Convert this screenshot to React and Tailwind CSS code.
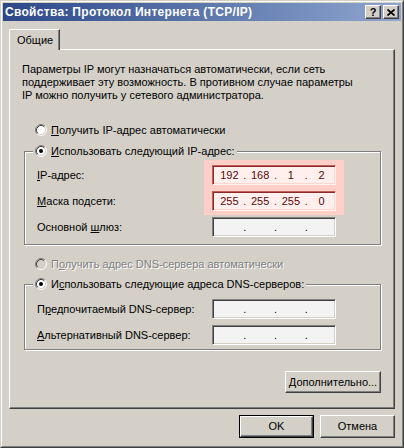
import React from "react";

function Radio({ checked, disabled }) {
  return (
    <svg width="12" height="12" viewBox="0 0 12 12" className="shrink-0">
      <circle cx="6" cy="6" r="4.5" fill={disabled ? "#d4d0c8" : "#ffffff"} />
      <path d="M2.11 9.89 A5.5 5.5 0 0 1 9.89 2.11" fill="none" stroke="#808080" strokeWidth="1" />
      <path d="M9.89 2.11 A5.5 5.5 0 0 1 2.11 9.89" fill="none" stroke="#ffffff" strokeWidth="1" />
      <path d="M2.82 9.18 A4.5 4.5 0 0 1 9.18 2.82" fill="none" stroke="#404040" strokeWidth="1" />
      <path d="M9.18 2.82 A4.5 4.5 0 0 1 2.82 9.18" fill="none" stroke="#d4d0c8" strokeWidth="1" />
      {checked && <circle cx="6" cy="6" r="2" fill="#000000" />}
    </svg>
  );
}

function IpField({ values, tinted }) {
  const v = values || ["", "", "", ""];
  const cls = tinted
    ? "w-[124px] h-[20px] border border-t-[#c0605a] border-l-[#c0605a] border-r-[#fff4f2] border-b-[#fff4f2] bg-[#fff0ee] shadow-[inset_1px_1px_0_#8a2a2a,inset_-1px_-1px_0_#ffd6d0] flex items-center pl-[3px] text-[#5a0808]"
    : "w-[124px] h-[20px] border border-t-[#808080] border-l-[#808080] border-r-white border-b-white bg-[#f3f3f3] shadow-[inset_1px_1px_0_#404040,inset_-1px_-1px_0_#d4d0c8] flex items-center pl-[3px] text-black";
  const dot = tinted ? "w-[4px] text-center text-[#c00000]" : "w-[4px] text-center";
  return (
    <div className={cls}>
      <span className="w-[27px] text-center">{v[0]}</span>
      <span className={dot}>.</span>
      <span className="w-[27px] text-center">{v[1]}</span>
      <span className={dot}>.</span>
      <span className="w-[27px] text-center">{v[2]}</span>
      <span className={dot}>.</span>
      <span className="w-[27px] text-center">{v[3]}</span>
    </div>
  );
}

function TitleBtn({ children }) {
  return (
    <div className="w-[16px] h-[14px] bg-[#d4d0c8] border border-t-white border-l-white border-r-[#404040] border-b-[#404040] shadow-[inset_-1px_-1px_0_#808080] flex items-center justify-center">
      {children}
    </div>
  );
}

function Button({ children, className, isDefault }) {
  if (isDefault) {
    return (
      <div className={"border border-black " + className}>
        <div className="w-full h-full bg-[#d4d0c8] border border-t-white border-l-white border-r-[#404040] border-b-[#404040] shadow-[inset_-1px_-1px_0_#808080] flex items-center justify-center">
          {children}
        </div>
      </div>
    );
  }
  return (
    <div className={"bg-[#d4d0c8] border border-t-white border-l-white border-r-[#404040] border-b-[#404040] shadow-[inset_-1px_-1px_0_#808080] flex items-center justify-center " + className}>
      {children}
    </div>
  );
}

export default function App() {
  return (
    <div className="w-[404px] h-[448px] bg-[#d4d0c8] border border-t-[#d4d0c8] border-l-[#d4d0c8] border-r-[#404040] border-b-[#404040] font-['Liberation_Sans',Arial,sans-serif] text-[11px] leading-[13px] text-black overflow-hidden">
      <div className="h-full border border-t-white border-l-white border-r-[#808080] border-b-[#808080] p-px flex flex-col">
        {/* Title bar */}
        <div className="h-[18px] shrink-0 flex items-center bg-gradient-to-r from-[#2c4888] to-[#90a6cf] pl-[2px] pr-[2px]">
          <span className="font-bold text-white text-[12px] tracking-[0.3px] leading-none whitespace-nowrap">
            Свойства: Протокол Интернета (TCP/IP)
          </span>
          <div className="ml-auto flex gap-[2px]">
            <TitleBtn>
              <span className="font-bold text-[11px] leading-none text-black">?</span>
            </TitleBtn>
            <TitleBtn>
              <svg width="8" height="7" viewBox="0 0 8 7">
                <path d="M0.5 0.5 L7.5 6.5 M7.5 0.5 L0.5 6.5" stroke="#000" strokeWidth="1.7" />
              </svg>
            </TitleBtn>
          </div>
        </div>

        {/* Tab */}
        <div className="ml-[6px] mt-[8px] w-[51px] h-[21px] -mb-px relative z-10 bg-[#d4d0c8] border-l border-t border-r border-l-white border-t-white border-r-[#404040] rounded-tl-[2px] shadow-[inset_-1px_0_0_#808080] pl-[7px] flex items-center">
          Общие
        </div>

        {/* Panel */}
        <div className="ml-[6px] w-[386px] h-[360px] shrink-0 border border-t-white border-l-white border-r-[#404040] border-b-[#404040] shadow-[inset_-1px_-1px_0_#808080] flex flex-col">
          <p className="pl-[12px] pt-[13px] leading-[13px] whitespace-nowrap">
            Параметры IP могут назначаться автоматически, если сеть
            <br />
            поддерживает эту возможность. В противном случае параметры
            <br />
            IP можно получить у сетевого администратора.
          </p>

          <div className="mt-[21px] ml-[25px] h-[14px] flex items-center gap-[4px]">
            <Radio />
            <span>
              <span className="underline">П</span>олучить IP-адрес автоматически
            </span>
          </div>

          <fieldset className="mt-[7px] ml-[14px] mr-[13px] border border-[#808080] shadow-[inset_1px_1px_0_#fff,1px_1px_0_#fff] pt-[7px] pb-[7px]">
            <legend className="ml-[8px] px-[2px] bg-[#d4d0c8]">
              <div className="h-[14px] flex items-center gap-[4px]">
                <Radio checked />
                <span>
                  <span className="underline">И</span>спользовать следующий IP-адрес:
                </span>
              </div>
            </legend>
            <div className="flex pl-[12px]">
              <div className="w-[175px] flex flex-col gap-[6px]">
                <div className="h-[20px] flex items-center">
                  <span>
                    <span className="underline">I</span>P-адрес:
                  </span>
                </div>
                <div className="h-[20px] flex items-center">
                  <span>
                    <span className="underline">М</span>аска подсети:
                  </span>
                </div>
                <div className="h-[20px] flex items-center">
                  <span>
                    Основной <span className="underline">ш</span>люз:
                  </span>
                </div>
              </div>
              <div className="flex flex-col gap-[6px]">
                <div className="-mx-[8px] -mt-[5px] -mb-[4px] px-[8px] pt-[5px] pb-[4px] bg-[#ffcfc8] flex flex-col gap-[6px]">
                  <IpField tinted values={["192", "168", "1", "2"]} />
                  <IpField tinted values={["255", "255", "255", "0"]} />
                </div>
                <IpField />
              </div>
            </div>
          </fieldset>

          <div className="mt-[12px] ml-[25px] h-[14px] flex items-center gap-[4px] text-[#808080] [text-shadow:1px_1px_0_#ffffff]">
            <Radio disabled />
            <span>
              П<span className="underline">о</span>лучить адрес DNS-сервера автоматически
            </span>
          </div>

          <fieldset className="mt-[6px] ml-[14px] mr-[13px] border border-[#808080] shadow-[inset_1px_1px_0_#fff,1px_1px_0_#fff] pt-[8px] pb-[4px]">
            <legend className="ml-[8px] px-[2px] bg-[#d4d0c8]">
              <div className="h-[14px] flex items-center gap-[4px]">
                <Radio checked />
                <span>
                  И<span className="underline">с</span>пользовать следующие адреса DNS-серверов:
                </span>
              </div>
            </legend>
            <div className="flex pl-[12px]">
              <div className="w-[175px] flex flex-col gap-[6px]">
                <div className="h-[20px] flex items-center">
                  <span>
                    П<span className="underline">р</span>едпочитаемый DNS-сервер:
                  </span>
                </div>
                <div className="h-[20px] flex items-center">
                  <span>
                    <span className="underline">А</span>льтернативный DNS-сервер:
                  </span>
                </div>
              </div>
              <div className="flex flex-col gap-[6px]">
                <IpField />
                <IpField />
              </div>
            </div>
          </fieldset>

          <div className="mt-[21px] self-end mr-[13px]">
            <Button className="w-[96px] h-[22px]">
              <span>
                <span className="underline">Д</span>ополнительно...
              </span>
            </Button>
          </div>
        </div>

        {/* Bottom buttons */}
        <div className="mt-[6px] pr-[6px] flex justify-end gap-[6px]">
          <Button isDefault className="w-[75px] h-[23px]">
            OK
          </Button>
          <Button className="w-[75px] h-[23px]">Отмена</Button>
        </div>
      </div>
    </div>
  );
}
